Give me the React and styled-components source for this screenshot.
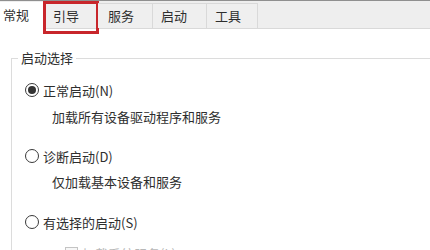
import React from "react";
import styled, { createGlobalStyle } from "styled-components";

const GlobalStyle = createGlobalStyle`
  html, body {
    margin: 0;
    padding: 0;
    background: #ffffff;
    overflow: hidden;
  }
  body {
    font-family: "Noto Sans CJK SC", "Noto Sans", sans-serif;
    font-size: 13px;
    color: #2e2e2e;
  }
`;

const Window = styled.div`
  width: 430px;
  height: 250px;
  overflow: hidden;
  background: #ffffff;
`;

const TabStrip = styled.div`
  display: flex;
  align-items: flex-end;
  height: 27px;
  border-top: 1px solid #8f8f8f;
  border-bottom: 1px solid #d9d9d9;
  background: #eeeeee;
`;

const Tab = styled.div`
  position: relative;
  box-sizing: border-box;
  width: ${(p) => p.$width}px;
  height: ${(p) => (p.$active ? 27 : 25)}px;
  padding-left: ${(p) => p.$pad}px;
  line-height: ${(p) => (p.$active ? 25 : 23)}px;
  background: ${(p) => (p.$active ? "#ffffff" : "#efefef")};
  border-right: 1px solid #d9d9d9;
  border-top: ${(p) => (p.$active ? "none" : "1px solid #d9d9d9")};
  margin-bottom: ${(p) => (p.$active ? "-1px" : "0")};
  white-space: nowrap;

  &::after {
    content: "";
    display: ${(p) => (p.$marked ? "block" : "none")};
    position: absolute;
    left: -1px;
    right: -2px;
    top: -3px;
    bottom: -6px;
    border: 3px solid #c8262b;
  }
`;

const Panel = styled.div`
  padding: 21px 0 0 11px;
`;

const GroupBox = styled.fieldset`
  margin: 0;
  padding: 0 0 40px 0;
  width: 480px;
  border: none;
  border-top: 1px solid #dcdcdc;
  border-left: 1px solid #dcdcdc;
`;

const Legend = styled.legend`
  margin-left: 6px;
  padding: 0 3px;
  line-height: 16px;
`;

const OptionRow = styled.label`
  display: flex;
  align-items: center;
  gap: 4px;
  height: 20px;
  margin-top: ${(p) => p.$top}px;
  padding-left: ${(p) => p.$indent}px;
  color: ${(p) => (p.$disabled ? "#b8b8b8" : "#2e2e2e")};
`;

const Radio = styled.span`
  box-sizing: border-box;
  width: 14px;
  height: 14px;
  border-radius: 50%;
  border: 1px solid #3a3a3a;
  display: flex;
  align-items: center;
  justify-content: center;

  &::before {
    content: "";
    display: ${(p) => (p.$checked ? "block" : "none")};
    width: 8px;
    height: 8px;
    border-radius: 50%;
    background: #333333;
  }
`;

const CheckBox = styled.span`
  box-sizing: border-box;
  width: 13px;
  height: 13px;
  border: 1px solid #c4c4c4;
  background: #f7f7f7;
`;

const Description = styled.div`
  height: 20px;
  line-height: 20px;
  margin-top: ${(p) => p.$top}px;
  padding-left: 40px;
`;

const tabs = [
  { label: "常规", width: 44, pad: 3, active: true },
  { label: "引导", width: 54, pad: 9, marked: true },
  { label: "服务", width: 55, pad: 10 },
  { label: "启动", width: 54, pad: 8 },
  { label: "工具", width: 51, pad: 8 },
];

export default function App() {
  return (
    <Window>
      <GlobalStyle />
      <TabStrip>
        {tabs.map((t) => (
          <Tab
            key={t.label}
            $width={t.width}
            $pad={t.pad}
            $active={t.active}
            $marked={t.marked}
          >
            {t.label}
          </Tab>
        ))}
      </TabStrip>
      <Panel>
        <GroupBox>
          <Legend>启动选择</Legend>
          <OptionRow $top={14} $indent={13}>
            <Radio $checked />
            正常启动(N)
          </OptionRow>
          <Description $top={7}>加载所有设备驱动程序和服务</Description>
          <OptionRow $top={19} $indent={13}>
            <Radio />
            诊断启动(D)
          </OptionRow>
          <Description $top={6}>仅加载基本设备和服务</Description>
          <OptionRow $top={20} $indent={13}>
            <Radio />
            有选择的启动(S)
          </OptionRow>
          <OptionRow $top={11} $indent={53} $disabled>
            <CheckBox />
            加载系统服务(L)
          </OptionRow>
        </GroupBox>
      </Panel>
    </Window>
  );
}
